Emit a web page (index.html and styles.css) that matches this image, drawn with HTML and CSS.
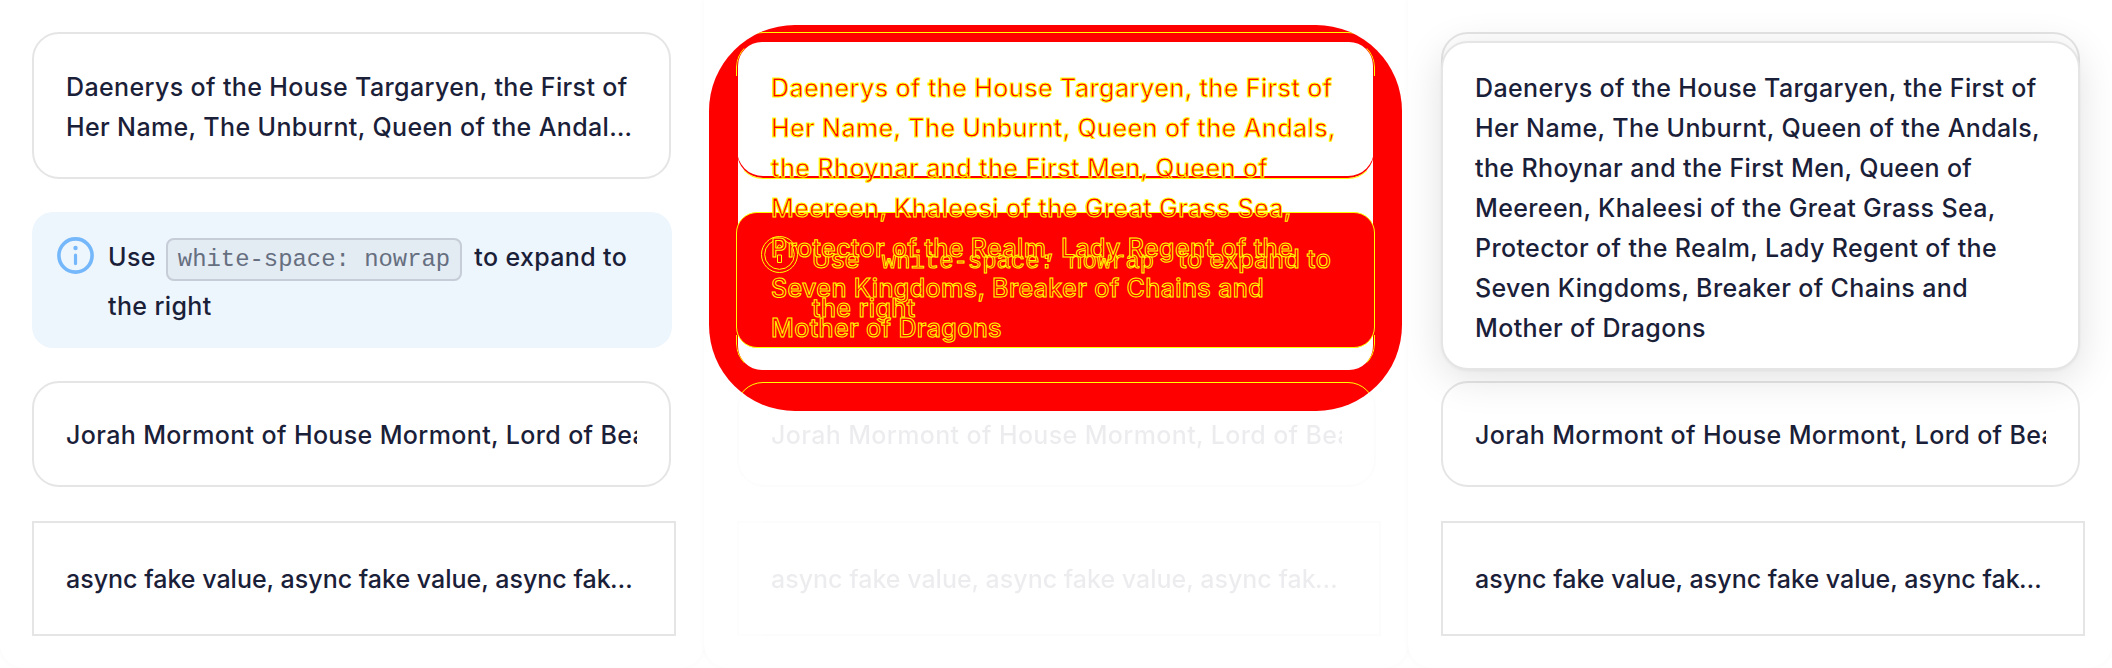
FILE: index.html
```html
<!DOCTYPE html>
<html lang="en">

<head>
  <meta charset="UTF-8">
  <meta name="viewport" content="width=device-width, initial-scale=1.0">
  <title>Text overflow</title>
  <link rel="stylesheet" href="styles.css">
</head>

<body>
  <div class="panels">

    <!-- Collapsed -->
    <section class="panel panel-first">
      <div class="card card-clamp"><p class="clamp">Daenerys of the House Targaryen, the First of Her Name, The Unburnt, Queen of the Andals, the Rhoynar and the First Men, Queen of Meereen, Khaleesi of the Great Grass Sea, Protector of the Realm, Lady Regent of the Seven Kingdoms, Breaker of Chains and Mother of Dragons</p></div>
      <div class="alert">
        <svg class="alert-icon" viewBox="0 0 37 37"><circle cx="18.5" cy="18.5" r="16.6" fill="none" stroke="#74b8fb" stroke-width="3.6"/><circle cx="18.5" cy="11" r="2.2" fill="#74b8fb"/><path d="M18.5 18v8.6" stroke="#74b8fb" stroke-width="3.2" stroke-linecap="round"/></svg>
        <p>Use <code>white-space: nowrap</code> to expand to the right</p>
      </div>
      <div class="card card-line"><p class="line-clip">Jorah Mormont of House Mormont, Lord of Bear Island, Warden of the North</p></div>
      <div class="box"><p class="line-dots">async fake value, async fake value, async fake value, async fake value</p></div>
    </section>

    <!-- Transition frame -->
    <section class="panel">
      <div class="ghost">
        <div class="card card-clamp"></div>
        <div class="alert alert-blank"></div>
        <div class="card card-line"><p class="line-clip">Jorah Mormont of House Mormont, Lord of Bear Island, Warden of the North</p></div>
        <div class="box"><p class="line-dots">async fake value, async fake value, async fake value, async fake value</p></div>
      </div>

      <div class="smear">
        <div class="smear-hole"></div>
        <div class="smear-frame frame-top"></div>
        <div class="smear-frame frame-open"></div>
        <div class="smear-frame frame-next"></div>
        <div class="smear-alert">
          <svg class="alert-icon" viewBox="0 0 37 37"><circle cx="18.5" cy="18.5" r="18" fill="none" stroke="#ff0"/><circle cx="18.5" cy="18.5" r="14.8" fill="none" stroke="#ff0"/><path d="M16.5 19v7.5h4V19zM16.5 11a2 2 0 1 0 4 0a2 2 0 1 0-4 0z" fill="none" stroke="#ff0"/></svg>
          <p>Use <code>white-space: nowrap</code> to expand to the right</p>
        </div>
        <p class="smear-text">Daenerys of the House Targaryen, the First of Her Name, The Unburnt, Queen of the Andals, the Rhoynar and the First Men, Queen of Meereen, Khaleesi of the Great Grass Sea, Protector of the Realm, Lady Regent of the Seven Kingdoms, Breaker of Chains and Mother of Dragons</p>
      </div>
    </section>

    <!-- Expanded -->
    <section class="panel panel-last">
      <div class="card card-clamp"></div>
      <div class="alert alert-blank"></div>
      <div class="card card-line"><p class="line-clip">Jorah Mormont of House Mormont, Lord of Bear Island, Warden of the North</p></div>
      <div class="box"><p class="line-dots">async fake value, async fake value, async fake value, async fake value</p></div>

      <div class="card card-open"><p>Daenerys of the House Targaryen, the First of Her Name, The Unburnt, Queen of the Andals, the Rhoynar and the First Men, Queen of Meereen, Khaleesi of the Great Grass Sea, Protector of the Realm, Lady Regent of the Seven Kingdoms, Breaker of Chains and Mother of Dragons</p></div>
    </section>

  </div>
</body>

</html>
```

FILE: styles.css
```css
* {
  box-sizing: border-box;
}

html,
body {
  height: 100%;
  margin: 0;
  overflow: hidden;
}

body {
  font-family: Inter, "Noto Sans", sans-serif;
  font-size: 25px;
  font-weight: 450;
  letter-spacing: 0.37px;
  line-height: 40px;
  color: #1a2038;
  background-color: #ffffff;
}

p {
  margin: 0;
}

.panels {
  display: grid;
  grid-template-columns: repeat(3, 704px);
  height: 668px;
}

.panel {
  position: relative;
  height: 668px;
  padding: 32px 32px 0 33px;
  background-color: #ffffff;
  border-radius: 0 0 24px 24px;
  box-shadow: 0 0 6px rgba(0, 0, 0, 0.03);
  overflow: hidden;
}

.panel-first {
  padding-left: 32px;
}

/* Cards */
.card {
  width: 639px;
  padding: 33px 32px 31px;
  border: 2px solid #e5e5e5;
  border-radius: 27px;
}

.card-clamp {
  height: 147px;
  margin-bottom: 33px;
}

.card-line {
  height: 106px;
  padding: 32px;
  margin-bottom: 34px;
}

.clamp {
  display: -webkit-box;
  -webkit-box-orient: vertical;
  -webkit-line-clamp: 2;
  overflow: hidden;
}

.line-clip {
  white-space: nowrap;
  overflow: hidden;
}

.box {
  width: 644px;
  height: 115px;
  padding: 36px 32px 35px;
  border: 2px solid #e5e5e5;
}

.line-dots {
  letter-spacing: 0;
  white-space: nowrap;
  overflow: hidden;
  text-overflow: ellipsis;
}

/* Alert */
.alert {
  display: flex;
  align-items: flex-start;
  gap: 14px;
  width: 640px;
  height: 136px;
  margin-bottom: 33px;
  padding: 22px 26px 20px 25px;
  line-height: 47px;
  background-color: #eef6fd;
  border-radius: 21px;
}

.alert-blank {
  width: 639px;
}

.alert-icon {
  flex: none;
  width: 37px;
  height: 37px;
  margin-top: 3px;
}

code {
  margin: 0 5px 0 3px;
  padding: 6px 10px;
  font-family: "Liberation Mono", monospace;
  font-size: 23.9px;
  font-weight: 400;
  letter-spacing: 0;
  color: #666f80;
  background-color: #e3ebf3;
  border: 2px solid #c7cdd6;
  border-radius: 8px;
}

/* Faded cards of the transition frame */
.ghost {
  opacity: 0.08;
}

/* Red smear of the transition frame */
.smear {
  position: absolute;
  top: 25px;
  left: 5px;
  width: 693px;
  height: 386px;
  background-color: #ff0000;
  border-radius: 86px;
  overflow: hidden;
}

.smear-hole {
  position: absolute;
  top: 17px;
  left: 29px;
  width: 635px;
  height: 328px;
  background-color: #ffffff;
  border-radius: 24px;
}

.smear-frame {
  position: absolute;
  left: 27px;
  width: 639px;
  border: 1px solid #ffff00;
  border-radius: 27px;
}

.frame-top {
  top: 7px;
  height: 147px;
  border-left-color: transparent;
  border-right-color: transparent;
  box-shadow: inset 0 -2px 0 #ff0000;
}

.frame-open {
  top: 15px;
  height: 331px;
  border-top-color: transparent;
  border-bottom-color: transparent;
  -webkit-mask-image: linear-gradient(#000 0 36px, transparent 36px calc(100% - 36px), #000 calc(100% - 36px));
  mask-image: linear-gradient(#000 0 36px, transparent 36px calc(100% - 36px), #000 calc(100% - 36px));
}

.frame-next {
  top: 357px;
  height: 106px;
}

.smear-text {
  position: absolute;
  top: 43px;
  left: 62px;
  width: 571px;
  color: #ff0000;
  -webkit-text-stroke: 1px #ffff00;
}

.smear-alert {
  position: absolute;
  top: 187px;
  left: 27px;
  display: flex;
  align-items: flex-start;
  gap: 14px;
  width: 639px;
  height: 136px;
  padding: 23px 26px 19px 24px;
  line-height: 47px;
  color: #ff0000;
  -webkit-text-stroke: 1px #ffff00;
  background-color: #ff0000;
  border: 1px solid #ffff00;
  border-radius: 21px;
}

.smear-alert .alert-icon {
  margin-top: 0;
}

.smear-alert code {
  color: #ff0000;
  background: none;
  border-color: transparent;
}

/* Expanded card of the last panel */
.card-open {
  position: absolute;
  top: 41px;
  left: 33px;
  height: 329px;
  padding: 25px 32px 23px;
  background-color: #ffffff;
  box-shadow: 0 8px 40px rgba(0, 0, 0, 0.12), 0 1px 3px rgba(0, 0, 0, 0.05);
}
```
